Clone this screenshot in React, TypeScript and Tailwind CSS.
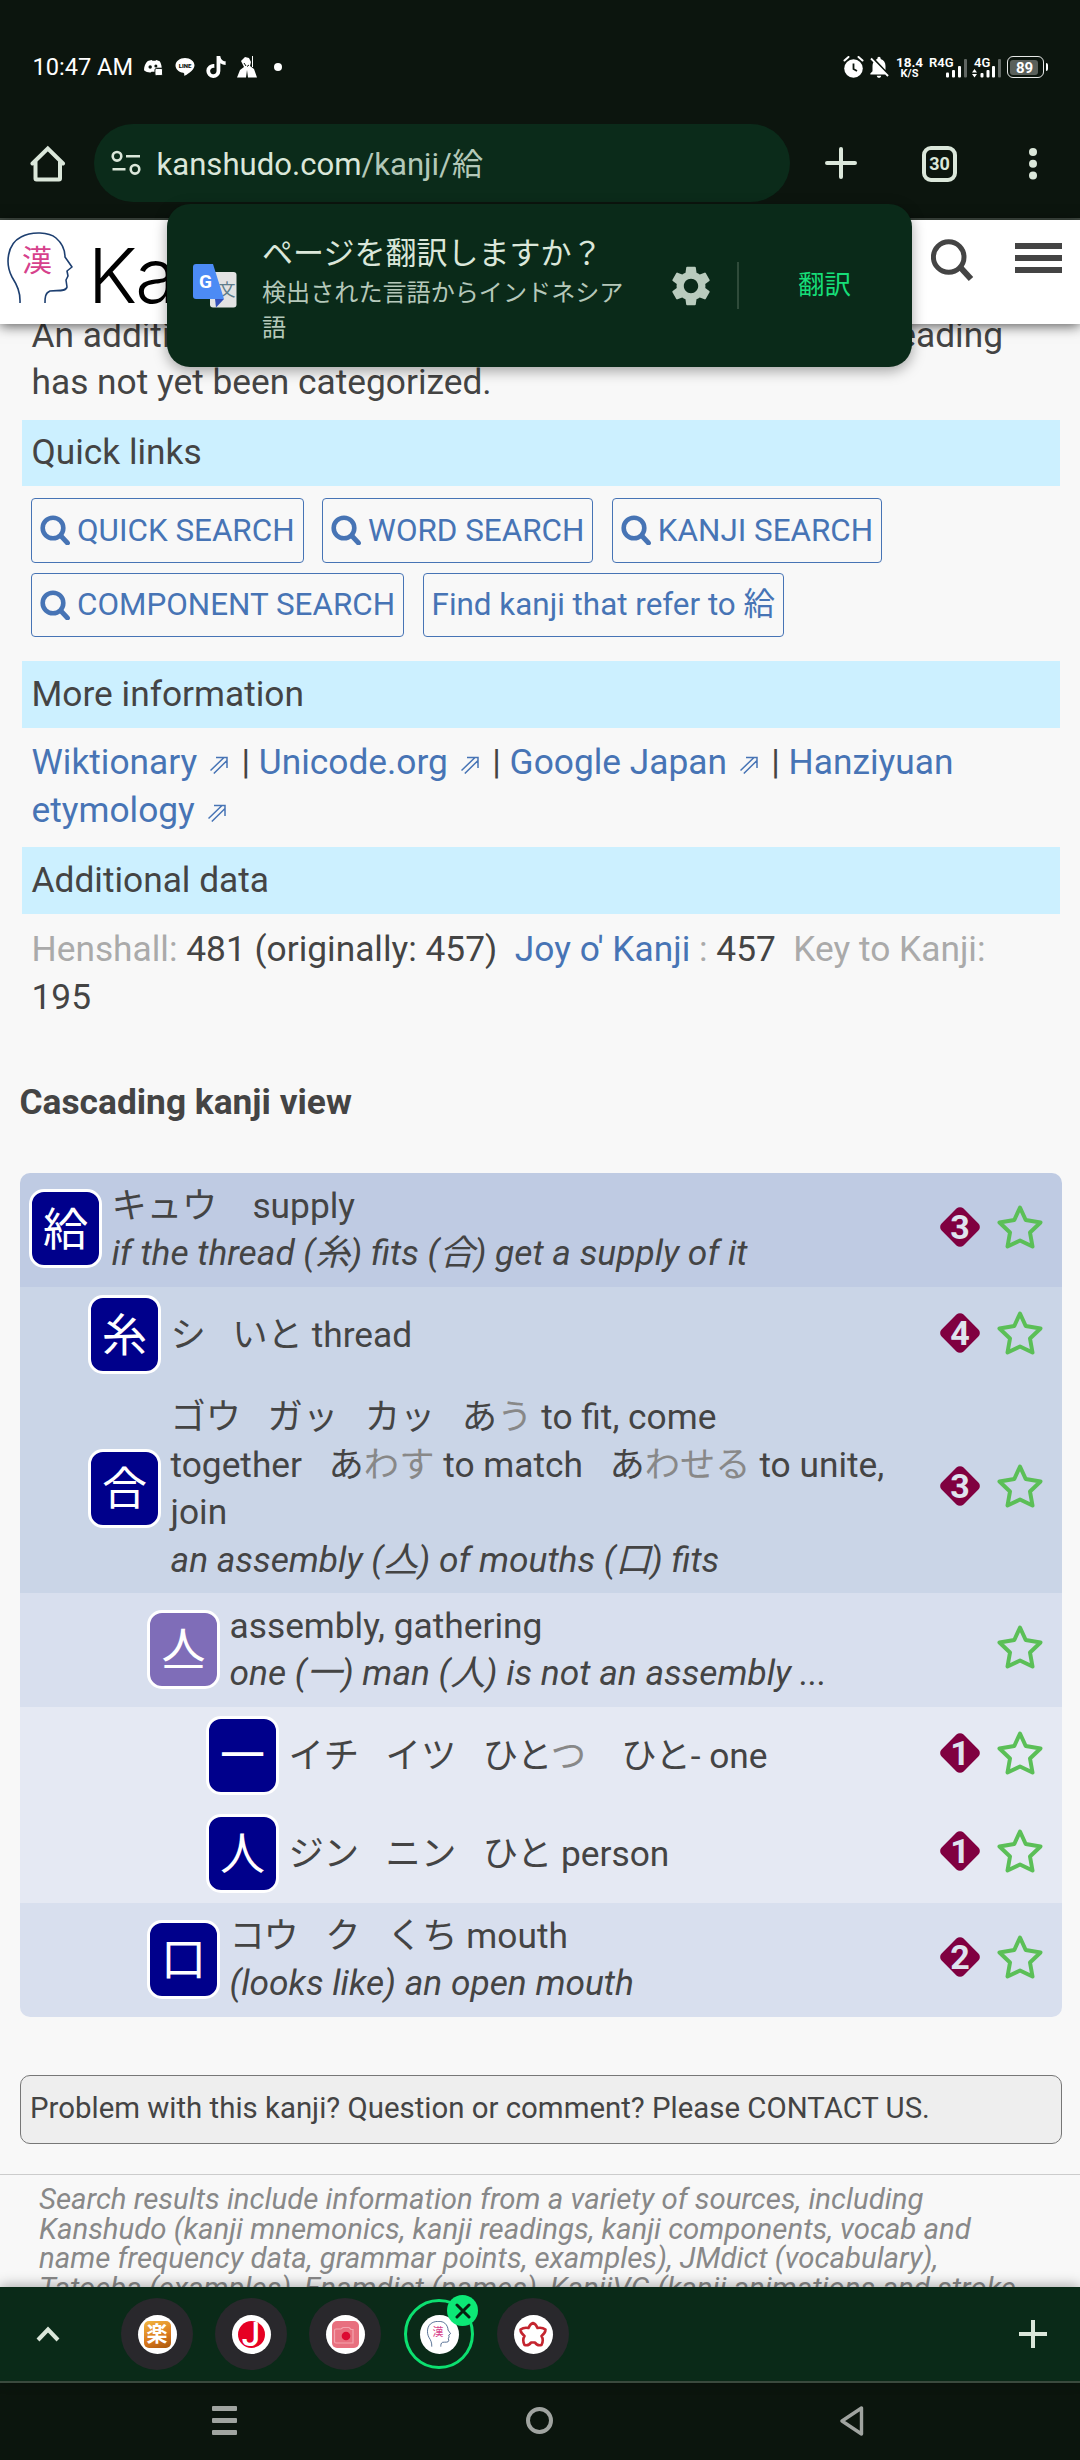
import React from "react";
import { FaTiktok } from "react-icons/fa6";
import { MdSettings, MdNotificationsOff } from "react-icons/md";

const JP = "font-['Roboto','Noto_Sans_CJK_JP',sans-serif]";

function Head({ className, sw }: { className: string; sw: number }) {
  return (
    <svg viewBox="0 0 66 72" className={className} fill="none">
      <path
        d="M13 71 C13.5 60 10 53 5 45 C-2 32 0 12 14 5 C25 -1 42 0 49 6 C56 12 58 20 58 25 L65 35 L60 39 L61 44 L59 48 L60 55 C59 60 50 58 43 59 C38 61 38 66 38 71"
        stroke="#1d3f70"
        strokeWidth={sw}
        strokeLinejoin="round"
      />
    </svg>
  );
}

function StatusBar() {
  return (
    <div className="flex h-[124px] items-start justify-between pl-[32.5px] pr-[32px] pt-[51px] text-white">
      <div className="flex h-8 items-center">
        <span className="w-[111px] whitespace-nowrap text-[23.6px] leading-8">10:47 AM</span>
        <svg viewBox="0 0 20 20" className="h-[19px] w-[19px]">
          <path d="M4 3.2 8 2l1 1h3l1-1 3.5 1.3c1.4 2 2 4.500 2.100 7H13v5l-2-.8H8l-1 .8c-2.200.2-5-.6-7-2.300C0 9 1.500 5.500 4 3.200Z" fill="#fff" />
          <circle cx="6.500" cy="9.500" r="1.800" fill="#0c150e" />
          <circle cx="12.500" cy="8.500" r="1.600" fill="#0c150e" />
          <rect x="11.500" y="11" width="8" height="7.500" rx="1.500" fill="#fff" stroke="#0c150e" />
        </svg>
        <svg viewBox="0 0 20 20" className="ml-3 h-5 w-5">
          <path d="M10 1C4.800 1 .5 4.300.5 8.500c0 3.700 3.300 6.700 7.800 7.300 1.200.3 1 1.500.9 3 .1.600 10.300-5.200 10.300-10.300C19.500 4.300 15.200 1 10 1Z" fill="#fff" />
          <text x="10" y="10.700" textAnchor="middle" fontSize="6" fontWeight="900" fill="#0c150e" fontFamily="Roboto">LINE</text>
        </svg>
        <FaTiktok className="ml-[11px] h-[22px] w-[20px]" />
        <svg viewBox="0 0 20 22" className="ml-[11px] h-[22px] w-5">
          <path d="M4 5 8 1l4 1 2 4-1 4 4 3 3 8.500H11L10 14l-1 7.500H0L3 14l4-3-2-4Z" fill="#fff" />
          <path d="M15.500 0v11M8 6.500l3 1" stroke="#fff" strokeWidth="1" />
          <path d="M7 7l2 3M12 9l-2 1.500" stroke="#0c150e" strokeWidth="1" />
        </svg>
        <span className="ml-[17px] h-2 w-2 rounded-full bg-white" />
      </div>
      <div className="flex h-8 items-center">
        <svg viewBox="0 0 20 22" className="h-[22px] w-[21px]">
          <circle cx="10" cy="12.500" r="9.300" fill="#fff" />
          <path d="M1 4.500 5 1M19 4.500 15 1" stroke="#fff" strokeWidth="2" strokeLinecap="round" />
          <path d="M10 7.500V13l3.500 2" stroke="#0c150e" strokeWidth="1.800" fill="none" />
        </svg>
        <MdNotificationsOff className="ml-[2px] h-[26px] w-[26px]" />
        <div className="ml-[4px] flex w-[27px] flex-col items-center text-[13.5px] font-bold leading-[12px]">
          <span>18.4</span>
          <span className="text-[11px] leading-[11px]">K/S</span>
        </div>
        <svg viewBox="0 0 40 24" className="ml-[6px] h-6 w-10">
          <text x="0" y="12" fontSize="13" fontWeight="600" fill="#fff" fontFamily="Roboto">R4G</text>
          <g fill="#fff">
            <rect x="17" y="17.500" width="3" height="5" rx="1" />
            <rect x="23" y="15" width="3" height="7.500" rx="1" />
            <rect x="29" y="11" width="3" height="11.500" rx="1" />
            <rect x="35" y="4" width="3" height="18.500" rx="1" opacity=".35" />
          </g>
        </svg>
        <svg viewBox="0 0 30 24" className="ml-[3px] h-6 w-[30px]">
          <text x="2" y="12" fontSize="13" fontWeight="600" fill="#fff" fontFamily="Roboto">4G</text>
          <g fill="#fff">
            <path d="M0 17.500 2.500 14 5 17.500zM0 19 2.500 22.500 5 19z" />
            <rect x="8.500" y="18" width="3" height="4.500" rx="1" />
            <rect x="14.500" y="15" width="3" height="7.500" rx="1" />
            <rect x="20" y="11" width="3" height="11.500" rx="1" />
            <rect x="26" y="4" width="3" height="18.500" rx="1" opacity=".35" />
          </g>
        </svg>
        <div className="ml-[5px] flex h-[22px] w-[37px] items-center rounded-[6px] border-[1.5px] border-white/90 p-[2px]">
          <span className="h-[15px] w-[28px] rounded-[3px] bg-[#5a605b] pl-[6px] text-[15px] font-bold leading-[16px]">89</span>
        </div>
        <span className="ml-[2px] h-[8px] w-[2px] rounded-r bg-white" />
      </div>
    </div>
  );
}

function Toolbar() {
  return (
    <div className="flex h-[96px] items-start border-b-2 border-[#414b43] text-[#dbe7da]">
      <svg viewBox="0 0 36 37" className="ml-[30px] mt-[21px] h-[37px] w-[36px]" fill="none" stroke="currentColor" strokeWidth="4" strokeLinejoin="round" strokeLinecap="round">
        <path d="M2.500 18.500 17.800 3.500 33 18.500" strokeLinejoin="miter" />
        <path d="M5.500 17v16.500q0 1 1 1h22.500q1 0 1-1V17" />
      </svg>
      <div className="ml-[28px] flex h-[78px] w-[696px] items-center rounded-full bg-[#0b2b1a] pl-[17px]">
        <svg viewBox="0 0 30 26" className="h-[26px] w-[30px]" fill="none" stroke="currentColor" strokeWidth="2.600">
          <circle cx="6" cy="6.300" r="4.300" />
          <circle cx="24" cy="19.300" r="4.300" />
          <path d="M15 6.300h14M1.500 19.300h13" />
        </svg>
        <span className="ml-[15.5px] mt-[4px] whitespace-nowrap text-[31.1px]">
          kanshudo.com<span className="text-[#b3c8b8]">/kanji/給</span>
        </span>
      </div>
      <svg viewBox="0 0 32 32" className="ml-[35px] mt-[23px] h-8 w-8" stroke="currentColor" strokeWidth="4" strokeLinecap="round">
        <path d="M16 2v28M2 16h28" />
      </svg>
      <div className="ml-[65px] mt-[22px] flex h-[36px] w-[35px] items-center justify-center rounded-[9px] border-4 border-[#dbe7da] text-[18px] font-bold leading-none">30</div>
      <svg viewBox="0 0 8 32" className="ml-[71.5px] mt-[24px] h-8 w-2" fill="currentColor">
        <circle cx="4" cy="4" r="4" />
        <circle cx="4" cy="15.800" r="4" />
        <circle cx="4" cy="27.500" r="4" />
      </svg>
    </div>
  );
}

function TranslatePopup() {
  return (
    <div className="absolute left-[167px] top-[204px] z-20 flex h-[163px] w-[745px] rounded-[23px] bg-[#0a2a19] shadow-[0_4px_14px_rgba(0,0,0,0.35)]">
      <svg viewBox="0 0 44 44" className="ml-[26px] mt-[60px] h-[44px] w-[44px]">
        <rect x="17" y="8" width="26.500" height="35.500" rx="3" fill="#e3e3e3" />
        <text x="34" y="32" textAnchor="middle" fontSize="17" fill="#5f7d8c" fontFamily="Noto Sans CJK JP">文</text>
        <path d="M22 35h9l-8 8.500z" fill="#3450b8" />
        <path d="M3 0h17l11 35H3q-3 0-3-3V3q0-3 3-3Z" fill="#4c8bf5" />
        <text x="12.500" y="24" textAnchor="middle" fontSize="19" fontWeight="700" fill="#fff" fontFamily="Roboto">G</text>
      </svg>
      <div className="ml-[25px] w-[375px] whitespace-nowrap pt-[30px]">
        <div className="text-[31px] leading-[40px] text-[#dbe7da]">ページを翻訳しますか？</div>
        <div className="mt-[2px] text-[24.1px] leading-[35px] text-[#b5c8ba]">
          検出された言語からインドネシア
          <br />語
        </div>
      </div>
      <MdSettings className="ml-[29.5px] mt-[58px] h-[48px] w-[48px] text-[#b9cbbd]" />
      <div className="ml-[22.5px] mt-[58px] h-[47px] w-[2px] bg-[#2f4b3a]" />
      <div className="ml-[59px] mt-[61px] text-[26.5px] leading-[40px] text-[#16de78]">翻訳</div>
    </div>
  );
}

function SiteHeader() {
  return (
    <div className="relative z-10 flex h-[104px] bg-white shadow-[0_2px_12px_rgba(0,0,0,0.65)]">
      <div className="relative ml-[7px] mt-[12px] h-[72px] w-[66px]">
        <Head className="h-[72px] w-[66px]" sw={1.6} />
        <span className="absolute left-[15px] top-[9px] text-[30px] leading-[40px] text-[#d6418c]">漢</span>
      </div>
      <div className="ml-[15px] mt-[3px] w-[836px] overflow-hidden font-['Inter',sans-serif] text-[76px] font-light leading-[104px] tracking-[-2px] text-black">Ka</div>
      <svg viewBox="0 0 44 44" className="ml-[7px] mt-[18px] h-[44px] w-[44px] shrink-0" fill="none" stroke="#444">
        <circle cx="17.700" cy="19" r="15.300" strokeWidth="5" />
        <path d="M29 29 40 41" strokeWidth="6" />
      </svg>
      <div className="ml-[40px] mt-[23px] flex w-[47px] shrink-0 flex-col gap-[6px]">
        <span className="h-[6px] bg-[#444]" />
        <span className="h-[6px] bg-[#444]" />
        <span className="h-[6px] bg-[#444]" />
      </div>
    </div>
  );
}

function Band({ children, className }: { children: React.ReactNode; className: string }) {
  return <div className={"mx-[22px] flex w-[1038px] items-center bg-[#ccf0ff] pl-[9.5px] " + className}>{children}</div>;
}

function Btn({ children, icon = true }: { children: React.ReactNode; icon?: boolean }) {
  return (
    <div className="flex h-[64.5px] items-center whitespace-nowrap rounded-[4px] border border-[#4774b5] px-[8px] text-[31.4px]">
      {icon && (
        <svg viewBox="0 0 30 30" className="mr-[7px] h-[30px] w-[30px]" fill="none" stroke="currentColor">
          <circle cx="13" cy="13" r="10.300" strokeWidth="4.600" />
          <path d="M21 21l6.500 7" strokeWidth="4.800" strokeLinecap="round" />
        </svg>
      )}
      <span>{children}</span>
    </div>
  );
}

function Ext() {
  return (
    <svg viewBox="0 0 18 18" className="ml-[13px] mr-[4.5px] inline-block h-[18px] w-[18px] align-[0px]" fill="none" stroke="currentColor" strokeWidth="1.500">
      <path d="M.5 14.500 14 1.500M3.800 17.500 17 4.500M6 1.500h11V12" />
    </svg>
  );
}

function Link({ children }: { children: React.ReactNode }) {
  return <span className="text-[#4774b5]">{children}</span>;
}

function Row({
  k, bg, indent, level, children, light,
}: {
  k: string; bg: string; indent: string; level?: string; children: React.ReactNode; light?: boolean;
}) {
  return (
    <div className={"flex items-center py-[9.5px] pr-[19px] " + bg + " " + indent}>
      <div className={"-mt-[1px] mb-[1px] flex h-[79px] w-[73px] shrink-0 items-center justify-center rounded-[15px] border-[3px] border-white pt-[3px] text-[45px] leading-none text-white " + (light ? "bg-[#7f6db8]" : "bg-[#00008b]")}>
        {k}
      </div>
      <div className="ml-[9.5px] flex-1 whitespace-nowrap leading-[47.4px]">{children}</div>
      {level && (
        <svg viewBox="0 0 44 44" className="-mt-[6px] h-[44px] w-[44px]">
          <rect x="6.500" y="6.500" width="31" height="31" rx="5" transform="rotate(45 22 22)" fill="#800040" />
          <text x="22" y="33.500" textAnchor="middle" fontSize="34" fontWeight="700" fill="#dfe3ee" fontFamily="Roboto">{level}</text>
        </svg>
      )}
      <svg viewBox="0 0 46 44" className="-mt-[6px] ml-[15px] h-[44px] w-[46px]" fill="none" stroke="#5bbf57" strokeWidth="4" strokeLinejoin="round">
        <path d="M23 2.500 28.700 15 43.500 17.500 33 27.500 35.500 41.500 23 35.500 10.500 41.500 13 27.500 2.500 17.500 17.300 15Z" />
      </svg>
    </div>
  );
}

function Dim({ children }: { children: React.ReactNode }) {
  return <span className="text-[#888]">{children}</span>;
}

function G() {
  return <span className="inline-block w-[26.5px]" />;
}

function Tab({ children }: { children: React.ReactNode }) {
  return (
    <div className="flex h-[72px] w-[72px] items-center justify-center rounded-full bg-[#29282c]">
      <div className="flex h-[39px] w-[39px] items-center justify-center rounded-full bg-white">{children}</div>
    </div>
  );
}

function TabStrip() {
  return (
    <div className="relative z-10 flex h-[96px] items-center border-b-2 border-[#3a4a3e] bg-[#0a2a18] shadow-[0_-2px_12px_rgba(0,0,0,0.3)]">
      <svg viewBox="0 0 24 16" className="ml-[35.5px] h-4 w-6" fill="none" stroke="#dbe7da" strokeWidth="4">
        <path d="M2 14 12 3.500 22 14" />
      </svg>
      <div className="ml-[61.5px] flex gap-[22px]">
        <Tab>
          <div className="flex h-[27px] w-[27px] items-center justify-center rounded-[5px] bg-[linear-gradient(160deg,#f3b63f,#d9781c_60%,#a8580f)] text-[21px] font-bold leading-none text-white">楽</div>
        </Tab>
        <Tab>
          <div className="flex h-[27px] w-[27px] items-center justify-center overflow-hidden rounded-full bg-[#e60023] text-[33px] font-medium leading-none text-white">
            J
          </div>
        </Tab>
        <Tab>
          <svg viewBox="0 0 27 27" className="h-[27px] w-[27px]">
            <rect width="27" height="27" rx="5" fill="#e8707f" />
            <path d="M2.500 9.500q0-1.500 1.500-1.500h5l2-1.500h6l2 2h2v13.500H4q-1.500 0-1.500-1.500z" fill="none" stroke="#f3a3ae" strokeWidth="1.200" />
            <circle cx="14" cy="15" r="4.300" fill="#dc0a32" />
          </svg>
        </Tab>
        <div className="relative mx-[1px] flex h-[70px] w-[70px] items-center justify-center self-center rounded-full border-[3.5px] border-[#0ce070]">
          <div className="relative flex h-[39px] w-[39px] items-center justify-center rounded-full bg-white">
            <Head className="h-[26px] w-[24px]" sw={2} />
            <span className="absolute left-[13px] top-[11px] text-[11px] leading-[13px] text-[#d6418c]">漢</span>
          </div>
          <span className="absolute -right-[7px] -top-[7px] flex h-[31px] w-[31px] items-center justify-center rounded-full bg-[#0ce876]">
            <svg viewBox="0 0 16 16" className="h-4 w-4" stroke="#06210f" strokeWidth="3" strokeLinecap="round">
              <path d="M2 2l12 12M14 2 2 14" />
            </svg>
          </span>
        </div>
        <Tab>
          <svg viewBox="0 0 28 26" className="h-[26px] w-[28px]" fill="none" stroke="#c4252f" strokeWidth="2.600" strokeLinejoin="round">
            <path d="M9.500 7Q11 3 14 2Q17 3 18.500 7Q23 6 26.500 8.500Q26.500 12 22.500 15Q25 19 22.500 24Q18 25 16 21.500H12Q10 25 5.500 24Q3 19 5.500 15Q1.500 12 1.500 8.500Q5 6 9.500 7Z" />
          </svg>
        </Tab>
      </div>
      <svg viewBox="0 0 28 28" className="ml-auto mr-[33px] h-7 w-7" stroke="#dbe7da" strokeWidth="4">
        <path d="M14 0v28M0 14h28" />
      </svg>
    </div>
  );
}

function NavBar() {
  return (
    <div className="flex h-[77px] bg-[#0b150d] text-[#a0a4a0]">
      <div className="ml-[212px] mt-[23px] flex w-[25px] flex-col gap-[7px]">
        <span className="h-[5px] rounded-[1px] bg-current" />
        <span className="h-[5px] rounded-[1px] bg-current" />
        <span className="h-[5px] rounded-[1px] bg-current" />
      </div>
      <div className="ml-[289px] mt-[23.5px] h-[27px] w-[27px] rounded-full border-[4px] border-current" />
      <svg viewBox="0 0 24 30" className="ml-[287px] mt-[23px] h-[30px] w-6" fill="none" stroke="currentColor" strokeWidth="3.400" strokeLinejoin="round">
        <path d="M21.500 2v26L2 15Z" />
      </svg>
    </div>
  );
}

export default function App() {
  return (
    <div className={"relative flex h-[2460px] w-[1080px] flex-col overflow-hidden bg-[#0c150e] " + JP} lang="ja">
      <StatusBar />
      <Toolbar />
      <TranslatePopup />
      <SiteHeader />
      <div className="h-[1963px] overflow-hidden bg-[#f8f8f8] text-[35.3px] text-[#444]">
        <div className="-mt-[12.5px] flex h-[47.5px] items-center justify-between whitespace-nowrap pl-[31.5px] pr-[77px]">
          <span>An additi</span>
          <span>eading</span>
        </div>
        <div className="h-[47px] pl-[31.5px] leading-[47.5px]">has not yet been categorized.</div>
        <Band className="mt-[14px] h-[66px] pb-[1px]">Quick links</Band>
        <div className="ml-[31px] mt-[12px] flex w-[1000px] flex-wrap gap-x-[18.5px] gap-y-[10px] text-[#4774b5]">
          <Btn>QUICK SEARCH</Btn>
          <Btn>WORD SEARCH</Btn>
          <Btn>KANJI SEARCH</Btn>
          <Btn>COMPONENT SEARCH</Btn>
          <Btn icon={false}>Find kanji that refer to 給</Btn>
        </div>
        <Band className="mt-[24px] h-[67px]">More information</Band>
        <div className="mt-[11px] h-[108px] whitespace-nowrap pl-[31.5px] leading-[47.5px]">
          <Link>Wiktionary<Ext /></Link> | <Link>Unicode.org<Ext /></Link> | <Link>Google Japan<Ext /></Link> | <Link>Hanziyuan</Link>
          <br />
          <Link>etymology<Ext /></Link>
        </div>
        <Band className="h-[67px]">Additional data</Band>
        <div className="mt-[12px] h-[95px] whitespace-nowrap pl-[31.5px] leading-[47.5px]">
          <span className="text-[#aaa]">Henshall:</span> 481 (originally: 457)&nbsp; <Link>Joy o' Kanji</Link> <span className="text-[#aaa]">:</span> 457&nbsp; <span className="text-[#aaa]">Key to Kanji:</span>
          <br />
          195
        </div>
        <h2 className="mt-[57px] pl-[19.5px] text-[35.3px] font-bold leading-[48px]">Cascading kanji view</h2>
        <div className="ml-[20px] mt-[47px] w-[1042px] overflow-hidden rounded-[10px]">
          <Row k="給" bg="bg-[#bfcbe3]" indent="pl-[9px]" level="3">
            <div>キュウ<span className="inline-block w-[35px]" />supply</div>
            <div className="italic">if the thread (糸) fits (合) get a supply of it</div>
          </Row>
          <Row k="糸" bg="bg-[#cad5e7]" indent="pl-[68px]" level="4">
            シ<G />いと thread
          </Row>
          <Row k="合" bg="bg-[#cad5e7]" indent="pl-[68px]" level="3">
            <div>ゴウ<G />ガッ<G />カッ<G />あ<Dim>う</Dim> to fit, come</div>
            <div>together<G />あ<Dim>わす</Dim> to match<G />あ<Dim>わせる</Dim> to unite,</div>
            <div>join</div>
            <div className="italic">an assembly (亼) of mouths (口) fits</div>
          </Row>
          <Row k="亼" bg="bg-[#d8dfee]" indent="pl-[127px]" light>
            <div>assembly, gathering</div>
            <div className="italic">one (一) man (人) is not an assembly ...</div>
          </Row>
          <Row k="一" bg="bg-[#e5e9f3]" indent="pl-[186px]" level="1">
            イチ<G />イツ<G />ひと<Dim>つ</Dim><span className="inline-block w-[35px]" />ひと- one
          </Row>
          <Row k="人" bg="bg-[#e5e9f3]" indent="pl-[186px]" level="1">
            ジン<G />ニン<G />ひと person
          </Row>
          <Row k="口" bg="bg-[#d8dfee]" indent="pl-[127px]" level="2">
            <div>コウ<G />ク<G />くち mouth</div>
            <div className="italic">(looks like) an open mouth</div>
          </Row>
        </div>
        <div className="ml-[20px] mt-[58px] flex h-[69px] w-[1042px] items-center rounded-[10px] border border-[#777] bg-[#eee] pb-[3px] pl-[9px] text-[29.4px]">
          Problem with this kanji? Question or comment? Please CONTACT US.
        </div>
        <div className="mt-[30px] border-t border-[#ccc]" />
        <div className="mt-[10px] whitespace-nowrap pl-[39px] text-[29.4px] italic leading-[29.5px] text-[#888]">
          <div>Search results include information from a variety of sources, including</div>
          <div>Kanshudo (kanji mnemonics, kanji readings, kanji components, vocab and</div>
          <div>name frequency data, grammar points, examples), JMdict (vocabulary),</div>
          <div>Tatoeba (examples), Enamdict (names), KanjiVG (kanji animations and stroke</div>
        </div>
      </div>
      <TabStrip />
      <NavBar />
    </div>
  );
}
